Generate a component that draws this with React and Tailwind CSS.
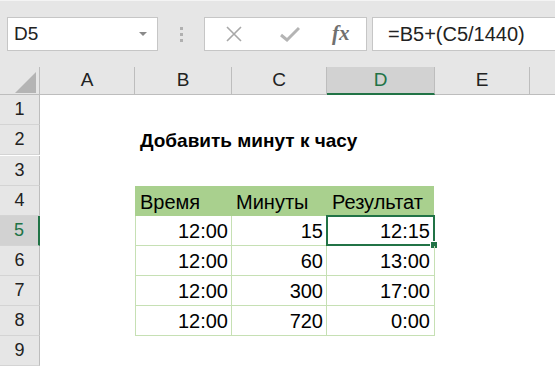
import React from "react";

// column widths, px
const cols = [
    { key: "A", w: "w-[95px]" },
    { key: "B", w: "w-[97px]" },
    { key: "C", w: "w-[95px]" },
    { key: "D", w: "w-[108px]" },
    { key: "E", w: "w-[95px]" },
    { key: "F", w: "w-[40px]" },
];

const data = [
    ["12:00", "15", "12:15"],
    ["12:00", "60", "13:00"],
    ["12:00", "300", "17:00"],
    ["12:00", "720", "0:00"],
];

const RowHead = ({ n, active }) => (
    <div
        className={`w-[40px] h-[30px] shrink-0 flex items-center justify-center text-[18px] border-b border-[#d4d4d4] ${
            active
                ? "bg-[#d2d2d2] text-[#217346] border-r-2 border-r-[#217346]"
                : "bg-[#e6e6e6] text-[#222] border-r border-r-[#bdbdbd]"
        }`}
    >
        {n}
    </div>
);

const Toolbar = () => (
    <div className="h-[67px] bg-[#e6e6e6] border-t border-[#f4f4f4] flex items-start pt-[16px]">
        {/* name box */}
        <div className="ml-[7px] w-[151px] h-[34px] bg-white border border-[#c6c6c6] flex items-center pl-[6px] pr-[10px]">
            <span className="text-[19px] text-[#222] flex-1">D5</span>
            <svg width="8" height="5" viewBox="0 0 8 5">
                <path d="M0 0 L8 0 L4 4 Z" fill="#8a8a8a" />
            </svg>
        </div>
        {/* grip */}
        <div className="w-[46px] h-[34px] flex flex-col items-center justify-center gap-[3px]">
            <div className="w-[3px] h-[3px] bg-[#b0b0b0]" />
            <div className="w-[3px] h-[3px] bg-[#b0b0b0]" />
            <div className="w-[3px] h-[3px] bg-[#b0b0b0]" />
        </div>
        {/* cancel / enter / fx */}
        <div className="w-[163px] h-[34px] bg-white border border-[#c6c6c6] flex items-center">
            <svg className="ml-[21px]" width="16" height="16" viewBox="0 0 16 16">
                <path d="M1 1 L15 15 M15 1 L1 15" stroke="#a8a8a8" strokeWidth="1.6" />
            </svg>
            <svg className="ml-[38px]" width="20" height="16" viewBox="0 0 20 16">
                <path d="M1 9 L7 14 L19 2" stroke="#b4b4b4" strokeWidth="3" fill="none" />
            </svg>
            <span className="ml-[32px] text-[21px] italic font-bold text-[#707070] font-['Liberation_Serif',serif]">
                fx
            </span>
        </div>
        {/* formula */}
        <div className="ml-[5px] flex-1 h-[34px] bg-white border border-[#c6c6c6] border-r-0 flex items-center pl-[15px]">
            <span className="text-[20px] text-[#222]">=B5+(C5/1440)</span>
        </div>
    </div>
);

const ColHeader = () => (
    <div className="flex h-[28px] bg-[#e6e6e6]">
        <div className="w-[40px] shrink-0 border-r border-b border-[#bdbdbd] relative">
            <svg className="absolute left-[15px] top-[5px]" width="21" height="21" viewBox="0 0 21 21">
                <path d="M21 0 L21 21 L0 21 Z" fill="#b4b4b4" />
            </svg>
        </div>
        {cols.map((c) =>
            c.key === "D" ? (
                <div
                    key={c.key}
                    className={`${c.w} shrink-0 flex items-center justify-center text-[19px] text-[#217346] bg-[#d2d2d2] border-r border-[#bdbdbd] border-b-2 border-b-[#217346]`}
                >
                    {c.key}
                </div>
            ) : (
                <div
                    key={c.key}
                    className={`${c.w} shrink-0 flex items-center justify-center text-[19px] text-[#222] border-r border-b border-[#bdbdbd]`}
                >
                    {c.key === "F" ? "" : c.key}
                </div>
            )
        )}
    </div>
);

export default function App() {
    return (
        <div className="w-[555px] h-[367px] overflow-hidden bg-white font-['Liberation_Sans',Arial,sans-serif]">
            <Toolbar />
            <ColHeader />
            <div className="flex flex-col">
                <div className="flex">
                    <RowHead n={1} />
                </div>
                <div className="flex">
                    <RowHead n={2} />
                    <div className="w-[95px]" />
                    <div className="flex items-center pl-[5px] pt-[2px] text-[19px] font-bold text-black whitespace-nowrap">
                        Добавить минут к часу
                    </div>
                </div>
                <div className="flex">
                    <RowHead n={3} />
                </div>
                {/* table header */}
                <div className="flex">
                    <RowHead n={4} />
                    <div className="w-[95px]" />
                    <div className="flex bg-[#a9d08e] border border-[#a9d08e]">
                        <div className="w-[96px] h-[28px] flex items-center pl-[4px] pt-[2px] text-[20px] text-black">Время</div>
                        <div className="w-[95px] h-[28px] flex items-center pl-[4px] pt-[2px] text-[20px] text-black">Минуты</div>
                        <div className="w-[106px] h-[28px] flex items-center pl-[5px] pt-[2px] text-[20px] text-black">Результат</div>
                    </div>
                </div>
                {data.map((r, i) => (
                    <div className="flex" key={i}>
                        <RowHead n={5 + i} active={i === 0} />
                        <div className="w-[95px]" />
                        <div className="flex border-l border-[#c6e0b4]">
                            <div className="w-[96px] h-[30px] flex items-center justify-end pr-[3px] pt-[2px] text-[20px] text-black border-r border-b border-[#c6e0b4]">
                                {r[0]}
                            </div>
                            <div className="w-[95px] h-[30px] flex items-center justify-end pr-[3px] pt-[2px] text-[20px] text-black border-r border-b border-[#c6e0b4]">
                                {r[1]}
                            </div>
                            <div className="w-[108px] h-[30px] relative flex items-center justify-end pr-[4px] pt-[2px] text-[20px] text-black border-r border-b border-[#c6e0b4]">
                                {r[2]}
                                {i === 0 && (
                                    <div className="absolute -left-[1px] -top-[1px] -right-[1px] -bottom-[1px] border-2 border-[#217346]">
                                        <div className="absolute -right-[5px] -bottom-[5px] w-[8px] h-[8px] bg-[#217346] border border-white" />
                                    </div>
                                )}
                            </div>
                        </div>
                    </div>
                ))}
                <div className="flex">
                    <RowHead n={9} />
                </div>
            </div>
        </div>
    );
}
